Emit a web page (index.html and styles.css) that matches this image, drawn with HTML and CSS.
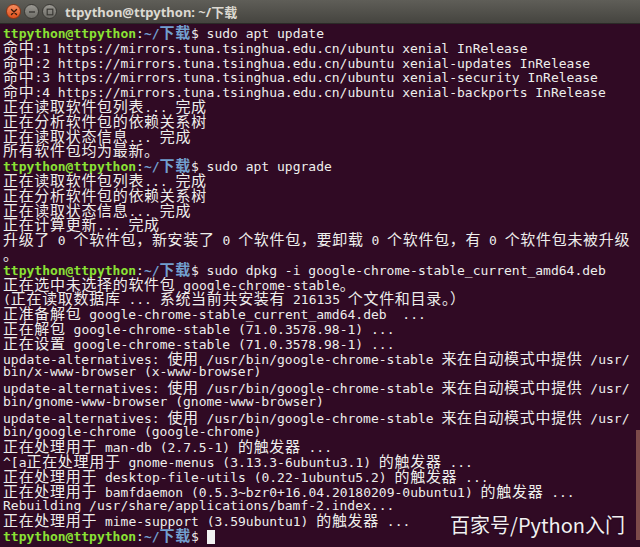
FILE: index.html
```html
<!DOCTYPE html>
<html lang="zh-CN">
<head>
  <meta charset="UTF-8" />
  <title>ttpython@ttpython: ~/下载</title>
  <link rel="stylesheet" href="styles.css">
</head>
<body>

  <!-- Barra de título -->
  <div class="titlebar">
    <div class="botones">
      <span class="btn cerrar">
        <svg width="8" height="8" viewBox="0 0 8 8"><path d="M1.5 1.5 L6.5 6.5 M6.5 1.5 L1.5 6.5" stroke="#3c1a0c" stroke-width="1.4" stroke-linecap="round"/></svg>
      </span>
      <span class="btn">
        <svg width="8" height="8" viewBox="0 0 8 8"><path d="M1 4 H7" stroke="#3a3935" stroke-width="1.4"/></svg>
      </span>
      <span class="btn">
        <svg width="8" height="8" viewBox="0 0 8 8"><rect x="1.2" y="1.2" width="5.6" height="5.6" fill="none" stroke="#3a3935" stroke-width="1.2"/></svg>
      </span>
    </div>
    <div class="titulo">ttpython@ttpython: ~/<span class="cjk-t">下载</span></div>
  </div>

  <!-- Terminal -->
  <div class="terminal">
    <div class="ln"><span class="g">ttpython@ttpython</span>:<span class="b">~/<span class="c">下载</span></span>$ sudo apt update</div>
    <div class="ln"><span class="c">命中</span>:1 https://mirrors.tuna.tsinghua.edu.cn/ubuntu xenial InRelease</div>
    <div class="ln"><span class="c">命中</span>:2 https://mirrors.tuna.tsinghua.edu.cn/ubuntu xenial-updates InRelease</div>
    <div class="ln"><span class="c">命中</span>:3 https://mirrors.tuna.tsinghua.edu.cn/ubuntu xenial-security InRelease</div>
    <div class="ln"><span class="c">命中</span>:4 https://mirrors.tuna.tsinghua.edu.cn/ubuntu xenial-backports InRelease</div>
    <div class="ln"><span class="c">正在读取软件包列表</span>... <span class="c">完成</span></div>
    <div class="ln"><span class="c">正在分析软件包的依赖关系树</span></div>
    <div class="ln"><span class="c">正在读取状态信息</span>... <span class="c">完成</span></div>
    <div class="ln"><span class="c">所有软件包均为最新。</span></div>
    <div class="ln"><span class="g">ttpython@ttpython</span>:<span class="b">~/<span class="c">下载</span></span>$ sudo apt upgrade</div>
    <div class="ln"><span class="c">正在读取软件包列表</span>... <span class="c">完成</span></div>
    <div class="ln"><span class="c">正在分析软件包的依赖关系树</span></div>
    <div class="ln"><span class="c">正在读取状态信息</span>... <span class="c">完成</span></div>
    <div class="ln"><span class="c">正在计算更新</span>... <span class="c">完成</span></div>
    <div class="ln"><span class="c">升级了</span> 0 <span class="c">个软件包，新安装了</span> 0 <span class="c">个软件包，要卸载</span> 0 <span class="c">个软件包，有</span> 0 <span class="c">个软件包未被升级</span></div>
    <div class="ln"><span class="c">。</span></div>
    <div class="ln"><span class="g">ttpython@ttpython</span>:<span class="b">~/<span class="c">下载</span></span>$ sudo dpkg -i google-chrome-stable_current_amd64.deb</div>
    <div class="ln"><span class="c">正在选中未选择的软件包</span> google-chrome-stable<span class="c">。</span></div>
    <div class="ln">(<span class="c">正在读取数据库</span> ... <span class="c">系统当前共安装有</span> 216135 <span class="c">个文件和目录。）</span></div>
    <div class="ln"><span class="c">正准备解包</span> google-chrome-stable_current_amd64.deb  ...</div>
    <div class="ln"><span class="c">正在解包</span> google-chrome-stable (71.0.3578.98-1) ...</div>
    <div class="ln"><span class="c">正在设置</span> google-chrome-stable (71.0.3578.98-1) ...</div>
    <div class="ln">update-alternatives: <span class="c">使用</span> /usr/bin/google-chrome-stable <span class="c">来在自动模式中提供</span> /usr/</div>
    <div class="ln">bin/x-www-browser (x-www-browser)</div>
    <div class="ln">update-alternatives: <span class="c">使用</span> /usr/bin/google-chrome-stable <span class="c">来在自动模式中提供</span> /usr/</div>
    <div class="ln">bin/gnome-www-browser (gnome-www-browser)</div>
    <div class="ln">update-alternatives: <span class="c">使用</span> /usr/bin/google-chrome-stable <span class="c">来在自动模式中提供</span> /usr/</div>
    <div class="ln">bin/google-chrome (google-chrome)</div>
    <div class="ln"><span class="c">正在处理用于</span> man-db (2.7.5-1) <span class="c">的触发器</span> ...</div>
    <div class="ln">^[a<span class="c">正在处理用于</span> gnome-menus (3.13.3-6ubuntu3.1) <span class="c">的触发器</span> ...</div>
    <div class="ln"><span class="c">正在处理用于</span> desktop-file-utils (0.22-1ubuntu5.2) <span class="c">的触发器</span> ...</div>
    <div class="ln"><span class="c">正在处理用于</span> bamfdaemon (0.5.3~bzr0+16.04.20180209-0ubuntu1) <span class="c">的触发器</span> ...</div>
    <div class="ln">Rebuilding /usr/share/applications/bamf-2.index...</div>
    <div class="ln"><span class="c">正在处理用于</span> mime-support (3.59ubuntu1) <span class="c">的触发器</span> ...</div>
    <div class="ln"><span class="g">ttpython@ttpython</span>:<span class="b">~/<span class="c">下载</span></span>$ <span class="cursor"></span></div>

    <!-- Barra de desplazamiento -->
    <div class="scroll"></div>

    <!-- Marca de agua -->
    <div class="marca">百家号/Python入门</div>
  </div>

</body>
</html>
```

FILE: styles.css
```css
* {
  margin: 0;
  padding: 0;
  box-sizing: border-box;
}

html, body {
  height: 100%;
  background-color: #300a24;
  overflow: hidden;
}

/* Barra de título */
.titlebar {
  height: 24px;
  display: flex;
  align-items: center;
  background: linear-gradient(to bottom, #5f5e58, #45443f);
  border-bottom: 1px solid #2b2a27;
}

.botones {
  display: flex;
  gap: 3px;
  padding-left: 6px;
}

.btn {
  width: 15px;
  height: 15px;
  border-radius: 50%;
  display: flex;
  align-items: center;
  justify-content: center;
  background: linear-gradient(to bottom, #9a9892, #6e6d67);
  border: 1px solid #3a3935;
}

.btn.cerrar {
  background: linear-gradient(to bottom, #f58d5f, #e0501c);
  border-color: #8e3414;
}

.titulo {
  margin-left: 8px;
  font-family: "Noto Sans", "Noto Sans CJK SC", sans-serif;
  font-size: 13px;
  font-weight: bold;
  color: #dcd9d1;
}

/* Terminal */
.terminal {
  position: relative;
  height: calc(100% - 24px);
  padding: 1px 0 0 3px;
  font-family: "DejaVu Sans Mono", "Noto Sans CJK SC", monospace;
  font-size: 13px;
  color: #eeeeec;
}

.ln {
  height: 14.8px;
  line-height: 14.8px;
  white-space: pre;
}

.c {
  display: inline-block;
  height: 14.8px;
  line-height: 14.8px;
  font-family: "Noto Sans CJK SC", sans-serif;
  font-size: 15px;
  letter-spacing: 0.68px;
}

.g {
  color: #8ae234;
  font-weight: bold;
}

.b {
  color: #729fcf;
  font-weight: bold;
}

.b .c {
  font-weight: bold;
}

.cursor {
  display: inline-block;
  width: 8px;
  height: 14px;
  vertical-align: -3px;
  background-color: #f2f2f2;
}

.scroll {
  position: absolute;
  right: 0;
  top: 406px;
  width: 4px;
  height: 110px;
  background-color: #7c4a4a;
}

.marca {
  position: absolute;
  right: 15px;
  bottom: 8px;
  font-family: "Noto Sans CJK SC", sans-serif;
  font-size: 20px;
  color: #f2f0f2;
  text-shadow: 0 0 2px rgba(0,0,0,0.4);
}
```
